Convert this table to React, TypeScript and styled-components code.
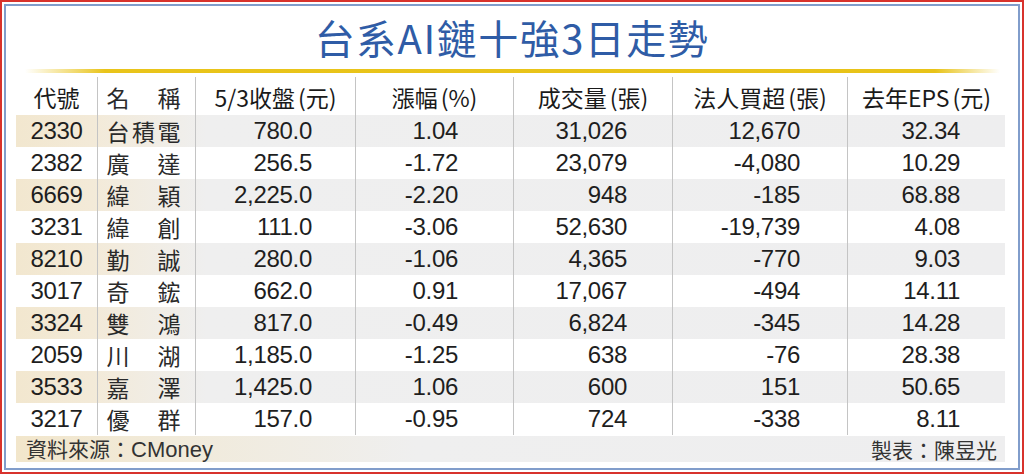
import React from 'react';
import styled, { createGlobalStyle } from 'styled-components';

const GlobalStyle = createGlobalStyle`
  html, body {
    margin: 0;
    padding: 0;
    background: #ffffff;
  }
  * {
    box-sizing: border-box;
  }
`;

const COLS = '81px 98px 160px 158px 159px 175px 158px';

const Outer = styled.div`
  width: 1024px;
  height: 474px;
  border: 2px solid #d8322c;
  padding: 2px;
  background: #ffffff;
  font-family: 'Liberation Sans', 'Noto Sans CJK TC', sans-serif;
  color: #1e1e1e;
`;

const Frame = styled.div`
  height: 100%;
  border: 2px solid #819dcb;
  display: flex;
  flex-direction: column;
  padding: 0 10px;
`;

const Title = styled.h1`
  margin: 0;
  height: 59px;
  display: flex;
  align-items: center;
  justify-content: center;
  padding-top: 2px;
  font-family: 'Noto Sans CJK TC', 'Liberation Sans', sans-serif;
  font-weight: 400;
  font-size: 40px;
  line-height: 1;
  letter-spacing: 1.5px;
  color: #2f5ca6;
`;

const GoldBar = styled.div`
  height: 4px;
  margin: 4px 8px 0 9px;
  background: linear-gradient(
    to right,
    rgba(232, 196, 23, 0) 0px,
    #e9c41a 80px,
    #e8c318 910px,
    rgba(232, 196, 23, 0) 100%
  );
`;

const Table = styled.div`
  margin-top: 4px;
  width: 989px;
  display: flex;
  flex-direction: column;
`;

const Row = styled.div<{ $shaded?: boolean; $head?: boolean }>`
  display: grid;
  grid-template-columns: ${COLS};
  height: ${(p) => (p.$head ? '38px' : '32px')};
  background: ${(p) =>
    p.$shaded
      ? 'linear-gradient(to right, #f2e7cf 0px, #f3ead8 75px, #efefef 190px, #eeeeef 100%)'
      : 'transparent'};
`;

const Cell = styled.div<{ $pr?: number; $align?: 'center' | 'right' }>`
  display: flex;
  align-items: center;
  justify-content: ${(p) => (p.$align === 'right' ? 'flex-end' : 'center')};
  padding-right: ${(p) => (p.$pr ? `${p.$pr}px` : '0')};
  font-size: 24px;
  line-height: 1;
  letter-spacing: -0.3px;
  white-space: nowrap;
  overflow: hidden;
  border-left: 1px solid #c4c4c4;
  &:first-child {
    border-left: none;
  }
`;

const HeadCell = styled(Cell)`
  font-family: 'Noto Sans CJK TC', 'Liberation Sans', sans-serif;
  font-size: 23px;
  letter-spacing: 0;
  padding-top: 2px;
  color: #1a1a1a;
`;

const Paren = styled.span`
  margin-left: 3px;
`;

const NameBox = styled.span`
  width: 74px;
  margin-right: 6px;
  display: flex;
  justify-content: space-between;
  font-family: 'Noto Sans CJK TC', sans-serif;
  font-size: 23px;
  line-height: 1;
  letter-spacing: 0;
  color: #2a2a2a;
`;

const Footer = styled.div`
  margin-top: 1px;
  height: 26px;
  width: 989px;
  display: flex;
  align-items: center;
  justify-content: space-between;
  padding: 0 8px 0 10px;
  background: linear-gradient(to right, #f2e6cb 0px, #f1ead9 150px, #efefef 400px, #eeeeef 100%);
  font-family: 'Noto Sans CJK TC', 'Liberation Sans', sans-serif;
  font-size: 21px;
  line-height: 1;
  color: #333333;
`;

const Source = styled.span`
  & b {
    font-family: 'Liberation Sans', sans-serif;
    font-weight: 400;
    font-size: 22px;
  }
`;

type Stock = {
  code: string;
  name: string;
  close: string;
  chg: string;
  vol: string;
  inst: string;
  eps: string;
};

const data: Stock[] = [
  { code: '2330', name: '台積電', close: '780.0', chg: '1.04', vol: '31,026', inst: '12,670', eps: '32.34' },
  { code: '2382', name: '廣達', close: '256.5', chg: '-1.72', vol: '23,079', inst: '-4,080', eps: '10.29' },
  { code: '6669', name: '緯穎', close: '2,225.0', chg: '-2.20', vol: '948', inst: '-185', eps: '68.88' },
  { code: '3231', name: '緯創', close: '111.0', chg: '-3.06', vol: '52,630', inst: '-19,739', eps: '4.08' },
  { code: '8210', name: '勤誠', close: '280.0', chg: '-1.06', vol: '4,365', inst: '-770', eps: '9.03' },
  { code: '3017', name: '奇鋐', close: '662.0', chg: '0.91', vol: '17,067', inst: '-494', eps: '14.11' },
  { code: '3324', name: '雙鴻', close: '817.0', chg: '-0.49', vol: '6,824', inst: '-345', eps: '14.28' },
  { code: '2059', name: '川湖', close: '1,185.0', chg: '-1.25', vol: '638', inst: '-76', eps: '28.38' },
  { code: '3533', name: '嘉澤', close: '1,425.0', chg: '1.06', vol: '600', inst: '151', eps: '50.65' },
  { code: '3217', name: '優群', close: '157.0', chg: '-0.95', vol: '724', inst: '-338', eps: '8.11' },
];

const Name = ({ text }: { text: string }) => (
  <NameBox>
    {text.split('').map((c, i) => (
      <span key={i}>{c}</span>
    ))}
  </NameBox>
);

export default function App() {
  return (
    <>
      <GlobalStyle />
      <Outer>
        <Frame>
          <Title>台系AI鏈十強3日走勢</Title>
          <GoldBar />
          <Table>
            <Row $head>
              <HeadCell>代號</HeadCell>
              <HeadCell>
                <Name text="名稱" />
              </HeadCell>
              <HeadCell>
                5/3收盤<Paren>(元)</Paren>
              </HeadCell>
              <HeadCell>
                漲幅<Paren>(%)</Paren>
              </HeadCell>
              <HeadCell>
                成交量<Paren>(張)</Paren>
              </HeadCell>
              <HeadCell>
                法人買超<Paren>(張)</Paren>
              </HeadCell>
              <HeadCell>
                去年EPS<Paren>(元)</Paren>
              </HeadCell>
            </Row>
            {data.map((s, i) => (
              <Row key={s.code} $shaded={i % 2 === 0}>
                <Cell>{s.code}</Cell>
                <Cell>
                  <Name text={s.name} />
                </Cell>
                <Cell $align="right" $pr={43}>{s.close}</Cell>
                <Cell $align="right" $pr={55}>{s.chg}</Cell>
                <Cell $align="right" $pr={45}>{s.vol}</Cell>
                <Cell $align="right" $pr={47}>{s.inst}</Cell>
                <Cell $align="right" $pr={45}>{s.eps}</Cell>
              </Row>
            ))}
          </Table>
          <Footer>
            <Source>
              資料來源：<b>CMoney</b>
            </Source>
            <span>製表：陳昱光</span>
          </Footer>
        </Frame>
      </Outer>
    </>
  );
}
